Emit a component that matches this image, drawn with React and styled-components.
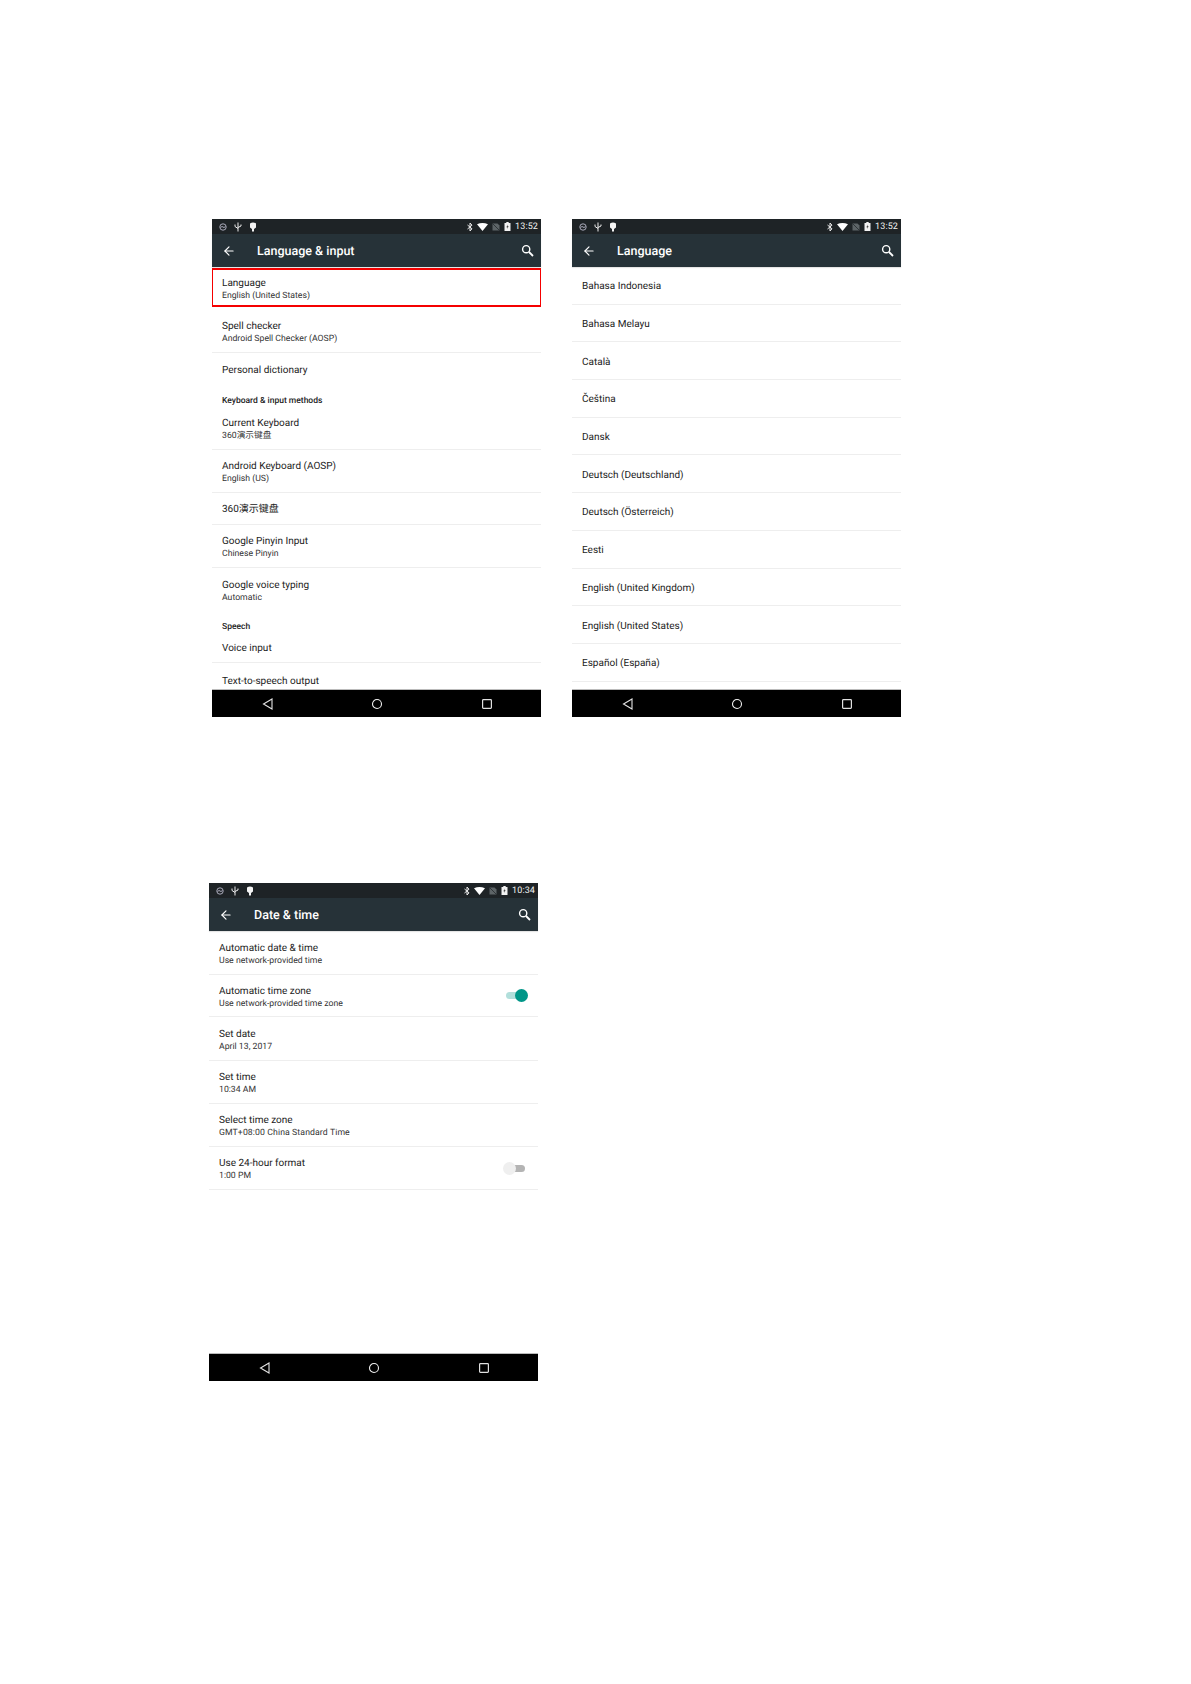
import React from 'react';
import styled, { createGlobalStyle } from 'styled-components';
import { ArrowLeft } from 'lucide-react';

const GlobalStyle = createGlobalStyle`
  html, body { margin: 0; padding: 0; background: #fff; }
  body {
    font-family: Roboto, "Noto Sans CJK SC", sans-serif;
    text-rendering: geometricPrecision;
  }
`;

const Page = styled.div`
  width: 1191px;
  height: 1684px;
  padding: 219px 0 0 212px;
  box-sizing: border-box;
  overflow: hidden;
`;

const TopRow = styled.div`
  display: flex;
  gap: 31px;
`;

const BottomRow = styled.div`
  display: flex;
  margin: 166px 0 0 -3px;
`;

const Phone = styled.div`
  width: 329px;
  height: 498px;
  display: flex;
  flex-direction: column;
  background: #fff;
`;

const StatusBar = styled.div`
  height: 15px;
  flex: none;
  background: #1e2326;
  display: flex;
  align-items: center;
  color: #fff;
  padding: 0 3px 0 7px;
`;

const StatusLeft = styled.div`
  display: flex;
  align-items: center;
  gap: 7px;
  flex: 1;
`;

const StatusRight = styled.div`
  display: flex;
  align-items: center;
  gap: 4px;
`;

const Clock = styled.span`
  font-size: 9px;
  letter-spacing: 0.1px;
  margin-left: 4px;
  padding-top: 1px;
  color: #f2f2f2;
`;

const Toolbar = styled.div`
  height: 33px;
  flex: none;
  background: #263238;
  display: flex;
  align-items: center;
  color: #fff;
  padding: 0 7px 0 10px;
  box-shadow: 0 1px 1px rgba(0, 0, 0, 0.1);
  position: relative;
  z-index: 1;
`;

const ToolbarTitle = styled.div`
  flex: 1;
  margin-left: 21px;
  padding-top: 1px;
  font-size: 12.5px;
  font-weight: 500;
`;

const Content = styled.div`
  flex: 1;
  min-height: 0;
  overflow: hidden;
`;

const Row = styled.div`
  height: ${p => p.$h}px;
  box-sizing: border-box;
  position: relative;
  display: flex;
  align-items: center;
  padding: ${p => p.$top ?? 4}px 10px 0;
  border-bottom: ${p => (p.$plain ? 'none' : '1px solid #eeeeee')};
`;

const RowText = styled.div`
  flex: 1;
  display: flex;
  flex-direction: column;
  gap: 1px;
`;

const Title = styled.div`
  font-size: 10px;
  line-height: 12px;
  color: #222;
`;

const Sub = styled.div`
  font-size: 8.7px;
  line-height: 11px;
  letter-spacing: ${p => p.$wide || 0}px;
  color: #333;
`;

const Section = styled.div`
  box-sizing: border-box;
  height: ${p => p.$h}px;
  padding: ${p => p.$top}px 10px 0;
  font-size: 8.5px;
  line-height: 11px;
  font-weight: 500;
  color: #222;
`;

const Highlight = styled.div`
  position: absolute;
  left: -1px;
  right: -1px;
  top: 1px;
  height: 39px;
  box-sizing: border-box;
  border: 2px solid #f50000;
`;

const Switch = styled.div`
  position: relative;
  width: 20px;
  height: 7px;
  border-radius: 4px;
  margin: -4px ${p => (p.$on ? 2 : 3)}px 0 0;
  background: ${p => (p.$on ? '#b2dfdb' : '#b4b4b4')};
`;

const Thumb = styled.div`
  position: absolute;
  top: -3px;
  ${p => (p.$on ? 'right: -2px;' : 'left: -2px;')}
  width: 13px;
  height: 13px;
  border-radius: 50%;
  background: ${p => (p.$on ? '#009688' : '#efefef')};
`;

const NavBar = styled.div`
  height: 28px;
  flex: none;
  background: #000;
  border-top: 1px solid #bbb;
  box-sizing: border-box;
  display: grid;
  grid-template-columns: repeat(3, 109.5px);
  align-items: center;
  justify-items: center;
  padding-left: 1px;
`;

const StatusIcons = () => (
  <>
    <StatusLeft>
      <svg width="8" height="8" viewBox="0 0 8 8" fill="none" stroke="#aab" strokeWidth="1">
        <circle cx="4" cy="4" r="3.2" />
        <path d="M1.5 4.5 L3 3.5 L5 4.5 L6.5 3.5" />
      </svg>
      <svg width="8" height="10" viewBox="0 0 8 10" fill="none" stroke="#eee" strokeWidth="1">
        <path d="M4 0.5V9.5M1 2.5V4.5L4 6.5M7 2.5V4L4 5.5" />
      </svg>
      <svg width="8" height="10" viewBox="0 0 8 10" fill="#f4f4f4">
        <path d="M1 1.5Q4 -0.5 7 1.5V5.5L5 7V9.5H3V7L1 5.5Z" />
      </svg>
    </StatusLeft>
    <StatusRight>
      <svg width="6" height="10" viewBox="0 0 6 10" fill="none" stroke="#eee" strokeWidth="1">
        <path d="M0.5 3L5 6.8L3 9V1L5 3.2L0.5 7" />
      </svg>
      <svg width="11" height="8" viewBox="0 0 11 8" fill="#fff">
        <path d="M0 1.2Q5.5 -1 11 1.2L5.5 8Z" />
      </svg>
      <svg width="8" height="8" viewBox="0 0 8 8">
        <path d="M0.5 0.5H5.5L7.5 2.5V7.5H0.5Z" fill="#5d6467" />
        <path d="M0.5 0.5L7.5 7.5" stroke="#23292c" strokeWidth="0.8" />
      </svg>
      <svg width="7" height="9" viewBox="0 0 7 9">
        <path d="M2.3 0H4.7V1H6.5V9H0.5V1H2.3Z" fill="#f2f2f2" />
        <path d="M3.8 2.5L2.4 5.2H3.5L3.2 7L4.6 4.3H3.5Z" fill="#333" />
      </svg>
    </StatusRight>
  </>
);

const SearchIcon = () => (
  <svg width="13" height="13" viewBox="0 0 13 13" fill="none" stroke="#fff">
    <circle cx="5.2" cy="5.2" r="3.6" strokeWidth="1.4" />
    <path d="M8 8L12 12" strokeWidth="1.8" />
  </svg>
);

const NavIcons = () => (
  <NavBar>
    <svg width="12" height="12" viewBox="0 0 12 12" fill="none" stroke="#e4e4e4" strokeWidth="1.1">
      <path d="M10 1V11L1.5 6Z" />
    </svg>
    <svg width="12" height="12" viewBox="0 0 12 12" fill="none" stroke="#f0f0f0" strokeWidth="1.1">
      <circle cx="6" cy="6" r="4.5" />
    </svg>
    <svg width="12" height="12" viewBox="0 0 12 12" fill="none" stroke="#e0e0e0" strokeWidth="1.2">
      <rect x="1.6" y="1.6" width="8.8" height="8.8" rx="0.8" />
    </svg>
  </NavBar>
);

const Screen = ({ title, time, children }) => (
  <Phone>
    <StatusBar>
      <StatusIcons />
      <Clock>{time}</Clock>
    </StatusBar>
    <Toolbar>
      <ArrowLeft size={14} strokeWidth={2} />
      <ToolbarTitle>{title}</ToolbarTitle>
      <SearchIcon />
    </Toolbar>
    <Content>{children}</Content>
    <NavIcons />
  </Phone>
);

const Item = ({ h, top, title, sub, plain, subWide, toggle, marked }) => (
  <Row $h={h} $top={top} $plain={plain}>
    {marked && <Highlight />}
    <RowText>
      <Title>{title}</Title>
      {sub && <Sub $wide={subWide}>{sub}</Sub>}
    </RowText>
    {toggle && (
      <Switch $on={toggle === 'on'}>
        <Thumb $on={toggle === 'on'} />
      </Switch>
    )}
  </Row>
);

const LANGUAGES = [
  'Bahasa Indonesia',
  'Bahasa Melayu',
  'Català',
  'Čeština',
  'Dansk',
  'Deutsch (Deutschland)',
  'Deutsch (Österreich)',
  'Eesti',
  'English (United Kingdom)',
  'English (United States)',
  'Español (España)',
];

const DATE_ROWS = [
  { h: 44, title: 'Automatic date & time', sub: 'Use network-provided time' },
  { h: 42, title: 'Automatic time zone', sub: 'Use network-provided time zone', toggle: 'on' },
  { h: 44, title: 'Set date', sub: 'April 13, 2017' },
  { h: 43, title: 'Set time', sub: '10:34 AM' },
  { h: 43, title: 'Select time zone', sub: 'GMT+08:00 China Standard Time', subWide: 0.1 },
  { h: 43, title: 'Use 24-hour format', sub: '1:00 PM', toggle: 'off' },
];

export default function App() {
  return (
    <Page>
      <GlobalStyle />
      <TopRow>
        <Screen title="Language & input" time="13:52">
          <Item h={43} top={3} title="Language" sub="English (United States)" marked plain />
          <Item h={43} title="Spell checker" sub="Android Spell Checker (AOSP)" />
          <Item h={32} top={3} title="Personal dictionary" plain />
          <Section $h={23} $top={11}>Keyboard &amp; input methods</Section>
          <Item h={42} top={2} title="Current Keyboard" sub="360演示键盘" />
          <Item h={43} top={3} title="Android Keyboard (AOSP)" sub="English (US)" />
          <Item h={32} top={2} title="360演示键盘" />
          <Item h={43} title="Google Pinyin Input" sub="Chinese Pinyin" />
          <Item h={45} top={2} title="Google voice typing" sub="Automatic" plain />
          <Section $h={20} $top={9}>Speech</Section>
          <Item h={30} top={3} title="Voice input" />
          <Item h={34} title="Text-to-speech output" plain />
        </Screen>
        <Screen title="Language" time="13:52">
          {LANGUAGES.map(name => (
            <Item key={name} h={37.7} title={name} />
          ))}
        </Screen>
      </TopRow>
      <BottomRow>
        <Screen title="Date & time" time="10:34">
          {DATE_ROWS.map(row => (
            <Item key={row.title} {...row} />
          ))}
        </Screen>
      </BottomRow>
    </Page>
  );
}
